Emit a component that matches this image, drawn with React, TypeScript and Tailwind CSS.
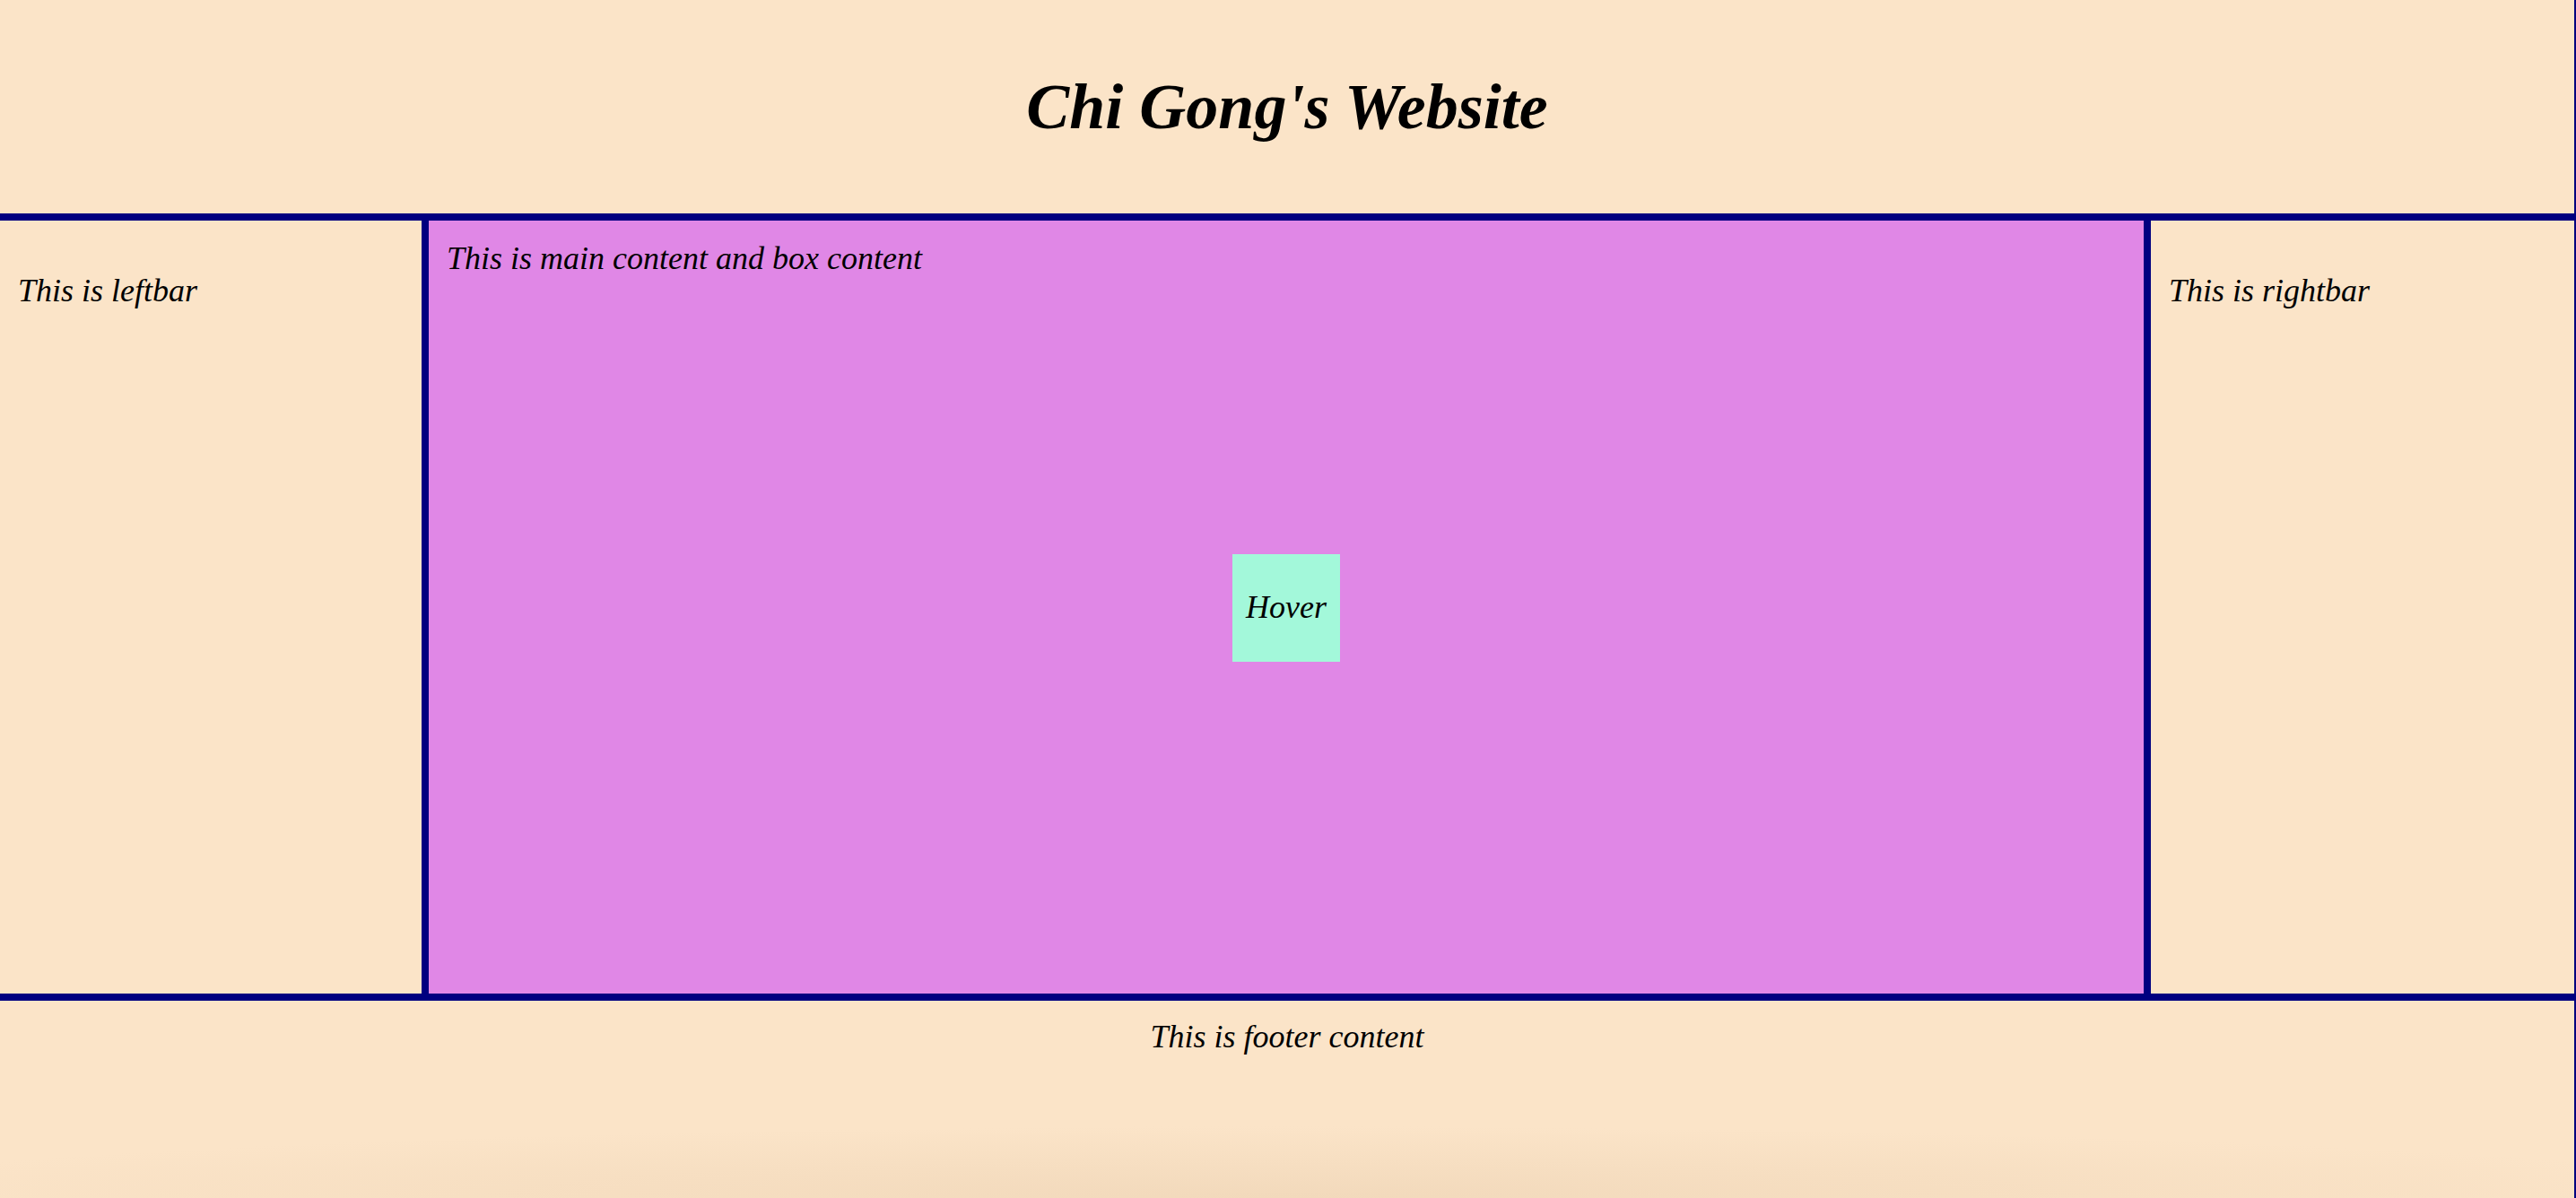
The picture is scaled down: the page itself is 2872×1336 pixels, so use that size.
export default function App() {
  return (
    <div
      className="min-h-screen w-full flex flex-col bg-[#fbe4c8] text-black border-r-2 border-[#000080] italic"
      style={{ fontFamily: '"Liberation Serif", "Times New Roman", serif' }}
    >
      <header className="h-[238px] flex items-center justify-center border-b-8 border-[#000080] box-content">
        <h1 className="text-[72px] font-bold leading-none">Chi Gong's Website</h1>
      </header>

      <div className="flex h-[862px]">
        <aside className="w-[470px] shrink-0 px-5 pt-[22px]">
          <p className="mt-9 text-[36px] leading-[1.15]">This is leftbar</p>
        </aside>

        <main className="flex-1 bg-[#e087e6] border-x-8 border-[#000080] px-5 pt-[22px] pb-5 flex flex-col">
          <p className="text-[36px] leading-[1.15]">This is main content and box content</p>
          <div className="flex-1 flex items-center justify-center -mt-[41px]">
            <div className="w-[120px] h-[120px] bg-[#a3f8da] flex items-center justify-center text-[36px] leading-[1.15]">
              Hover
            </div>
          </div>
        </main>

        <aside className="w-[472px] shrink-0 px-5 pt-[22px]">
          <p className="mt-9 text-[36px] leading-[1.15]">This is rightbar</p>
        </aside>
      </div>

      <footer className="flex-1 border-t-8 border-[#000080] pt-5 text-center text-[36px] leading-[1.15] bg-[radial-gradient(ellipse_58%_80px_at_50%_100%,#f2d9bb,#fbe4c8)]">
        This is footer content
      </footer>
    </div>
  );
}
